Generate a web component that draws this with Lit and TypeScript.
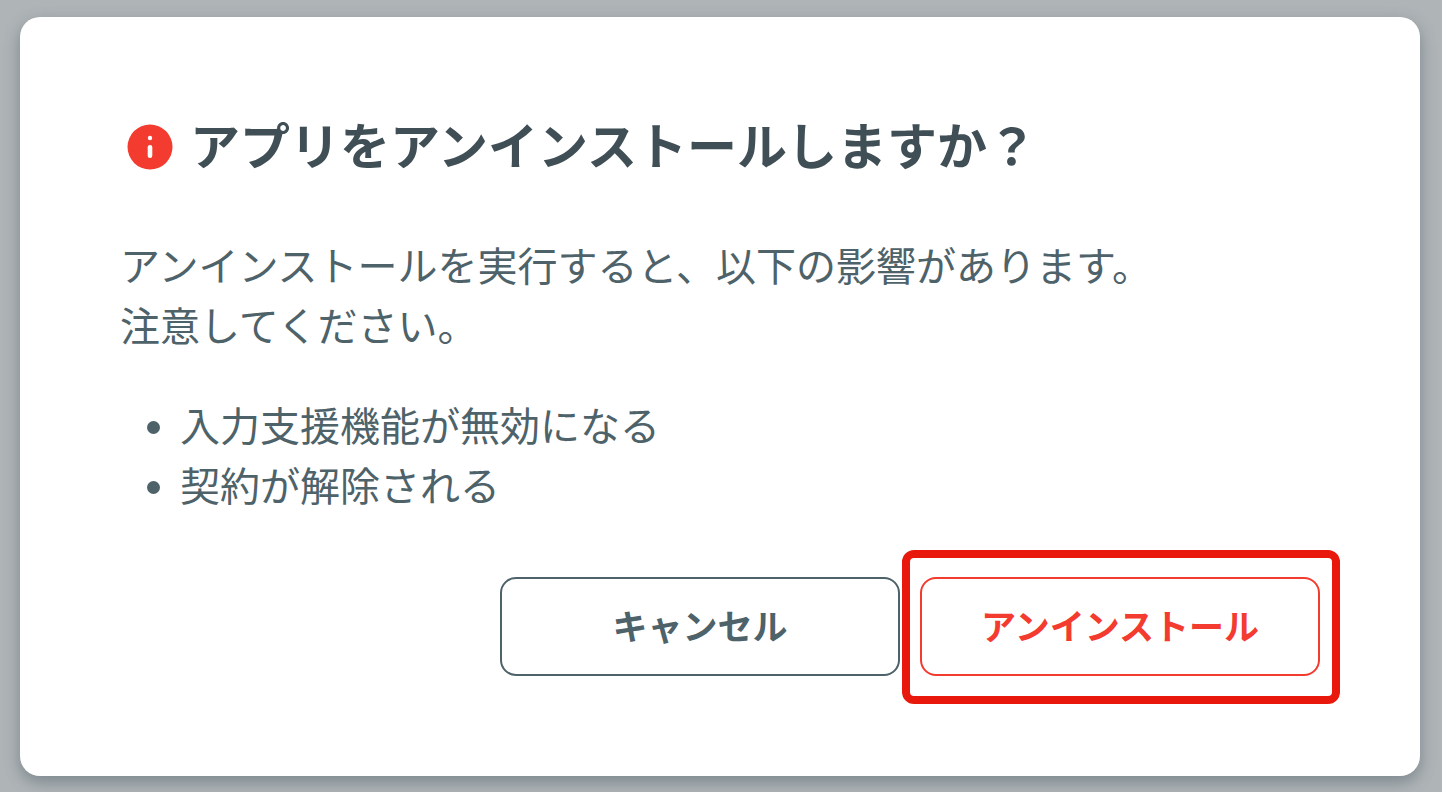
import { LitElement, html, css } from "lit";
import { customElement } from "lit/decorators.js";

@customElement("app-root")
class AppRoot extends LitElement {
  static styles = css`
    :host {
      display: block;
      box-sizing: border-box;
      min-height: 100vh;
      padding: 17px 22px 16px 20px;
      background: #afb4b7;
      color: #4e6269;
      font: 40px/60px Inter, "Noto Sans CJK JP", sans-serif;
    }
    * { box-sizing: border-box; }
    .dialog {
      display: flex;
      flex-direction: column;
      padding: 100px;
      background: #fff;
      border-radius: 20px;
      box-shadow: 0 6px 16px rgba(60, 80, 88, 0.45);
    }
    .title {
      display: flex;
      align-items: center;
      gap: 10px;
      margin: 0 0 60px;
      color: #404f56;
      font-size: 50px;
      line-height: 60px;
      font-weight: 700;
    }
    .icon { flex: none; width: 60px; height: 60px; }
    p { margin: 0; }
    ul { margin: 40px 0 60px; padding-left: 60px; }
    .actions { display: flex; justify-content: flex-end; gap: 20px; }
    button {
      width: 400px;
      height: 99px;
      padding: 0;
      border: 2px solid #4e6269;
      border-radius: 16px;
      background: #fff;
      color: inherit;
      font: 700 35px/60px Inter, "Noto Sans CJK JP", sans-serif;
    }
    .danger {
      border-color: #f33b30;
      color: #f33b30;
      position: relative;
    }
    .danger::after {
      content: "";
      position: absolute;
      inset: -29px -22px -30px -20px;
      border: 8px solid #e8180c;
      border-radius: 12px;
      pointer-events: none;
    }
  `;

  render() {
    return html`
      <main class="dialog" role="dialog" aria-labelledby="title">
        <h1 class="title" id="title">
          <svg class="icon" viewBox="0 0 60 60" aria-hidden="true">
            <circle cx="30" cy="30" r="22.5" fill="#f33b30" />
            <circle cx="30" cy="21" r="2.2" fill="#fff" />
            <path d="M30 30.3v8.5" stroke="#fff" stroke-width="4.6" stroke-linecap="round" />
          </svg>
          <span>アプリをアンインストールしますか？</span>
        </h1>
        <p>アンインストールを実行すると、以下の影響があります。<br />注意してください。</p>
        <ul>
          <li>入力支援機能が無効になる</li>
          <li>契約が解除される</li>
        </ul>
        <div class="actions">
          <button type="button">キャンセル</button>
          <button type="button" class="danger">アンインストール</button>
        </div>
      </main>
    `;
  }
}
